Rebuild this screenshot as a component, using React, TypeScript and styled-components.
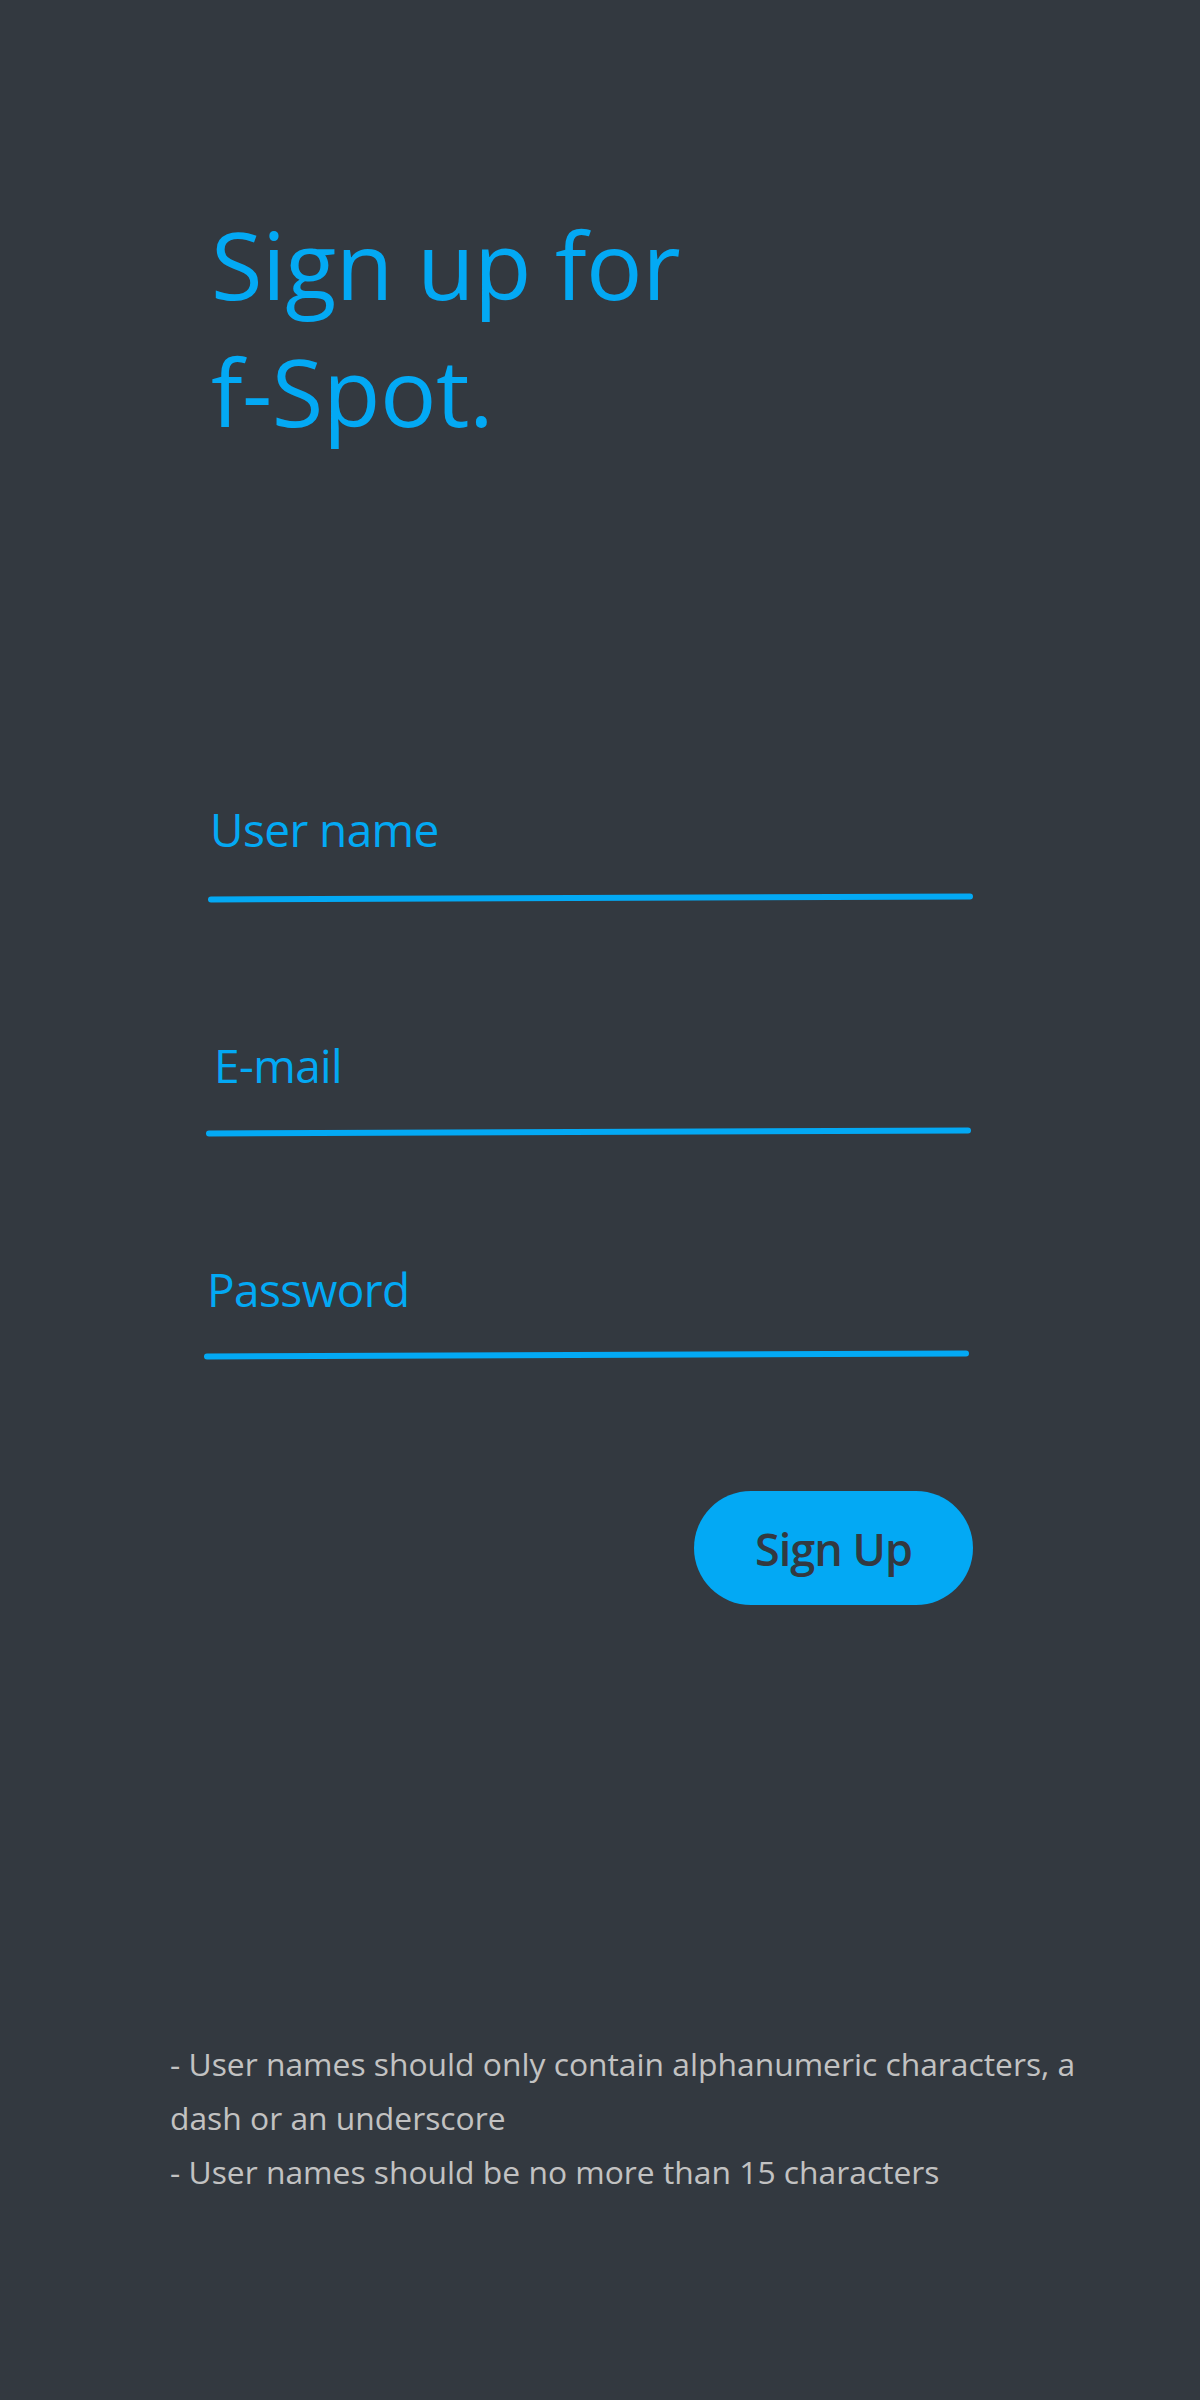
import React from "react";
import styled, { createGlobalStyle } from "styled-components";

const BG = "#333940";
const BLUE = "#03a9f4";

const GlobalStyle = createGlobalStyle`
  html, body {
    margin: 0;
    padding: 0;
    background: ${BG};
  }
  body {
    font-family: "Open Sans", "Noto Sans", sans-serif;
  }
  * { box-sizing: border-box; }
`;

const Page = styled.main`
  min-height: 2400px;
  background: ${BG};
  padding-top: 201px;
  display: flex;
  flex-direction: column;
`;

const Title = styled.h1`
  margin: 0 0 0 211px;
  max-width: 540px;
  font-family: "Open Sans", "Noto Sans", sans-serif;
  font-weight: 400;
  font-size: 94px;
  line-height: 127px;
  color: ${BLUE};
  letter-spacing: -0.5px;
`;

const Form = styled.form`
  margin: 343px 0 0 208px;
  width: 765px;
  display: flex;
  flex-direction: column;
`;

const Field = styled.label<{ $top: number; $gap: number; $shift: number }>`
  display: flex;
  flex-direction: column;
  margin-top: ${(p) => p.$top}px;
  margin-left: ${(p) => p.$shift}px;
  gap: ${(p) => p.$gap}px;
`;

const LabelText = styled.span<{ $indent: number }>`
  padding-left: ${(p) => p.$indent}px;
  font-size: 46px;
  line-height: 62px;
  color: ${BLUE};
  letter-spacing: -0.6px;
`;

const Underline = styled.span`
  display: block;
  height: 6px;
  width: 765px;
  border-radius: 3px;
  background: ${BLUE};
  transform: rotate(-0.22deg);
`;

const SubmitButton = styled.button`
  align-self: flex-end;
  margin-top: 133px;
  width: 279px;
  height: 114px;
  border: none;
  border-radius: 57px;
  background: ${BLUE};
  color: ${BG};
  font-family: "Open Sans", "Noto Sans", sans-serif;
  font-weight: 600;
  font-size: 45px;
  letter-spacing: -1px;
  cursor: pointer;
  padding: 0;
`;

const Rules = styled.div`
  margin: 432px 0 0 170px;
  width: 945px;
  display: flex;
  flex-direction: column;
`;

const Rule = styled.p`
  margin: 0;
  font-size: 31.8px;
  line-height: 54px;
  color: #c2c2c2;
  font-weight: 400;
`;

const fields = [
  { label: "User name", indent: 2, top: 0, gap: 35, shift: 0 },
  { label: "E-mail", indent: 8, top: 133, gap: 33, shift: -2 },
  { label: "Password", indent: 3, top: 123, gap: 32, shift: -4 },
];

const rules = [
  "- User names should only contain alphanumeric characters, a dash or an underscore",
  "- User names should be no more than 15 characters",
];

export default function App() {
  return (
    <>
      <GlobalStyle />
      <Page>
        <Title>Sign up for f-Spot.</Title>
        <Form onSubmit={(e) => e.preventDefault()}>
          {fields.map((f) => (
            <Field key={f.label} $top={f.top} $gap={f.gap} $shift={f.shift}>
              <LabelText $indent={f.indent}>{f.label}</LabelText>
              <Underline />
            </Field>
          ))}
          <SubmitButton type="submit">Sign Up</SubmitButton>
        </Form>
        <Rules>
          {rules.map((r) => (
            <Rule key={r}>{r}</Rule>
          ))}
        </Rules>
      </Page>
    </>
  );
}
